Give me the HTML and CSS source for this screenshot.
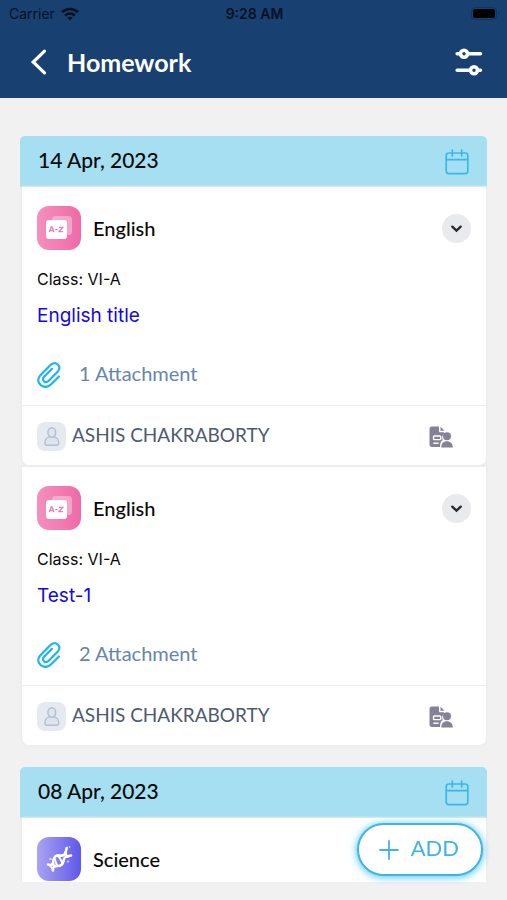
FILE: index.html
```html
<!DOCTYPE html>
<html lang="en">
<head>
<meta charset="utf-8">
<meta name="viewport" content="width=device-width, initial-scale=1">
<title>Homework</title>
<link rel="stylesheet" href="styles.css">
</head>
<body>
<svg class="defs" aria-hidden="true">
  <defs>
    <linearGradient id="pink" x1="0" x2="1"><stop offset="0" stop-color="#f590bd"/><stop offset="1" stop-color="#ee6aa6"/></linearGradient>
    <linearGradient id="violet" x1="0" x2="1"><stop offset="0" stop-color="#a9a4f3"/><stop offset="1" stop-color="#5f57ea"/></linearGradient>
    <symbol id="calendar" viewBox="0 0 24 26">
      <g fill="none" stroke="#3bb8ea" stroke-width="1.7" stroke-linecap="round"><rect x="1.2" y="4" width="21.6" height="20.6" rx="2.6"/><path d="M1.5 10.7h21M7.3 1v6M16.7 1v6"/></g>
    </symbol>
    <symbol id="letters" viewBox="0 0 44 44">
      <rect width="44" height="44" rx="12" fill="url(#pink)"/>
      <rect x="15" y="10" width="20" height="19" rx="3.5" fill="#fff" opacity=".35"/>
      <rect x="9" y="14" width="21" height="19" rx="3" fill="#fff"/>
      <path d="M12.3 26l1.9-5h.8l1.9 5M13.1 24.5h3M18.3 23.6h2.2M22 21.3h3.8L22 25.7h4" fill="none" stroke="#f17db0" stroke-width="1.3"/>
    </symbol>
    <symbol id="dna" viewBox="0 0 44 44">
      <rect width="44" height="44" rx="12" fill="url(#violet)"/>
      <g fill="none" stroke="#fff" stroke-linecap="round" stroke-linejoin="round">
        <path stroke-width="2.6" d="M11 27.5c5 1.500 5-1 5.500-4.500s3-5 6-4.500 5 0 6-2.500l1.200-5M16 33.500c-.5-3.500 1-4.500 4.500-4.500s5.500-2 6-5 1-4 3.500-4.500l4-1"/>
        <path stroke-width="2" d="M12.500 28l3.500 4.500M17.500 21.500l2.500 7M21.500 19l4 7M28 15.500l2.500 4.500M16 25.500l1.500 4"/>
      </g>
      <g fill="#fff" opacity=".6"><circle cx="13.500" cy="22" r="1.300"/><circle cx="31" cy="24.500" r="1.200"/><circle cx="32.500" cy="10" r=".9"/></g>
    </symbol>
    <symbol id="clip" viewBox="0 0 24 26">
      <path d="M22 14.500l-7.300 7.200c-3.400 3.400-7.600 4-10.900 1.500-3.500-2.900-3.400-6.900-.2-10.200L13.200 3.300c2.400-2.400 5.200-2.700 7.500-.9 2.400 2.100 2.200 5-.1 7.400l-8.900 9c-1.600 1.600-3.300 1.700-4.700.5-1.400-1.400-1.200-3.100.3-4.700l7.700-7.800" fill="none" stroke="#1fb4ee" stroke-width="2.200" stroke-linecap="round"/>
    </symbol>
    <symbol id="person" viewBox="0 0 29 29">
      <rect width="29" height="29" rx="8" fill="#e4eaf0"/>
      <g fill="#dde4ee" stroke="#b3bdd3" stroke-width="1.400"><path d="M14.800 14.500c-4.500 0-7 3-7 6.500 0 1.600 1 2.300 2.500 2.300h9c1.500 0 2.500-.7 2.500-2.300 0-3.500-2.500-6.500-7-6.500z"/><ellipse cx="14.800" cy="10.500" rx="3.900" ry="4.700"/></g>
    </symbol>
    <symbol id="report" viewBox="0 0 24 22">
      <path fill="#858295" d="M3 .5h7v4.200c0 1 .6 1.600 1.600 1.600h3.400v2c-2 1.200-2.500 3.400-1.300 5.700-1.700 1.200-2.500 2.800-2.700 7H3c-1.700 0-2.500-.9-2.500-2.500V3C.5 1.300 1.400.5 3 .5zM11.500.7l4 4.100h-4z"/>
      <rect x="4.500" y="10" width="7.200" height="3.600" rx=".8" fill="none" stroke="#fff" stroke-width="1.400"/>
      <path d="M4.200 17.200h5.500" stroke="#fff" stroke-width="1.400"/>
      <circle cx="18" cy="10.300" r="4" fill="#858295"/>
      <path fill="#858295" d="M12.200 21.500c.2-4.100 2.200-6.300 5.700-6.300s5.700 2.200 6 6.300z"/>
    </symbol>
    <symbol id="chevron" viewBox="0 0 29 29"><path d="M10.300 12.700l4.200 4 4.200-4" fill="none" stroke="#292b30" stroke-width="2.400" stroke-linecap="round"/></symbol>
  </defs>
</svg>

<header class="top">
  <div class="status">
    <span class="carrier">Carrier
      <svg width="18" height="14" viewBox="0 0 18 14" aria-hidden="true"><g fill="none" stroke="#06101e" stroke-width="2.600"><path d="M1 5.300c4.600-4.500 11.400-4.500 16 0M4 8.600c3-2.700 7-2.700 10 0"/></g><path d="M9 13.500L6.300 10.800c1.500-1.400 3.900-1.400 5.400 0z" fill="#06101e"/></svg>
    </span>
    <span class="time">9:28 AM</span>
    <span class="power"><svg width="29" height="14" viewBox="0 0 29 14" aria-hidden="true"><rect x=".5" y=".5" width="25" height="12" rx="3.500" fill="none" stroke="#12335b"/><rect x="2" y="2" width="22" height="9" rx="2" fill="#000"/><path d="M27 4.500c1.500.8 1.500 3.200 0 4z" fill="#12335b"/></svg></span>
  </div>
  <nav class="bar">
    <button class="plain" aria-label="Back"><svg width="18" height="28" viewBox="0 0 18 28"><path d="M15.500 3.200L4.200 14l11.300 10.800" fill="none" stroke="#fff" stroke-width="3.200" stroke-linecap="round"/></svg></button>
    <h1>Homework</h1>
    <button class="plain" aria-label="Filter"><svg width="28" height="28" viewBox="0 0 28 28"><g fill="none" stroke="#fff" stroke-linecap="round" stroke-width="3.600"><path d="M2.200 5.800h2M13 5.800h12.500M2.200 22.300h12M23.500 22.300h2"/><circle cx="9" cy="5.800" r="3.500"/><circle cx="19" cy="22.300" r="3.500"/></g></svg></button>
  </nav>
</header>

<main class="list">
  <section class="day">
    <header class="date"><h2>14 Apr, 2023</h2><svg width="24" height="26" aria-hidden="true"><use href="#calendar"/></svg></header>
    <article class="card">
      <div class="body">
        <div class="subject"><svg width="44" height="44" aria-hidden="true"><use href="#letters"/></svg><h3>English</h3><button class="toggle" aria-label="Expand"><svg width="29" height="29"><use href="#chevron"/></svg></button></div>
        <p class="class">Class: VI-A</p>
        <a class="title" href="#">English title</a>
        <a class="files" href="#"><svg width="24" height="26" aria-hidden="true"><use href="#clip"/></svg><span>1 Attachment</span></a>
      </div>
      <footer class="teacher"><svg width="29" height="29" aria-hidden="true"><use href="#person"/></svg><span>ASHIS CHAKRABORTY</span><button class="plain" aria-label="Submissions"><svg width="24" height="22"><use href="#report"/></svg></button></footer>
    </article>
    <article class="card">
      <div class="body">
        <div class="subject"><svg width="44" height="44" aria-hidden="true"><use href="#letters"/></svg><h3>English</h3><button class="toggle" aria-label="Expand"><svg width="29" height="29"><use href="#chevron"/></svg></button></div>
        <p class="class">Class: VI-A</p>
        <a class="title" href="#">Test-1</a>
        <a class="files" href="#"><svg width="24" height="26" aria-hidden="true"><use href="#clip"/></svg><span>2 Attachment</span></a>
      </div>
      <footer class="teacher"><svg width="29" height="29" aria-hidden="true"><use href="#person"/></svg><span>ASHIS CHAKRABORTY</span><button class="plain" aria-label="Submissions"><svg width="24" height="22"><use href="#report"/></svg></button></footer>
    </article>
  </section>
  <section class="day">
    <header class="date"><h2>08 Apr, 2023</h2><svg width="24" height="26" aria-hidden="true"><use href="#calendar"/></svg></header>
    <article class="card">
      <div class="body">
        <div class="subject"><svg width="44" height="44" aria-hidden="true"><use href="#dna"/></svg><h3>Science</h3></div>
      </div>
    </article>
  </section>
</main>
<button class="add"><svg width="20" height="20" viewBox="0 0 20 20" aria-hidden="true"><path d="M10 1v18M1 10h18" stroke="#42b4e4" stroke-width="1.800" stroke-linecap="round"/></svg><span>ADD</span></button>
</body>
</html>
```

FILE: styles.css
```css
* {
  box-sizing: border-box;
}

body {
  margin: 0;
  height: 100vh;
  display: flex;
  flex-direction: column;
  background: #f1f1f1;
  color: #080808;
  font-family: Lato, sans-serif;
}

h1, h2, h3, p {
  margin: 0;
  font-weight: 500;
}

svg {
  display: block;
  flex: none;
}

button {
  font: inherit;
  cursor: pointer;
}

.defs {
  position: absolute;
  width: 0;
  height: 0;
}

.plain {
  padding: 0;
  border: 0;
  background: none;
}

.top {
  flex: none;
  background: #184172;
}

.status {
  display: grid;
  grid-template-columns: 1fr auto 1fr;
  align-items: center;
  height: 28px;
  padding: 0 7px 0 9px;
  color: #06101e;
  font: 14px/20px Inter, sans-serif;
}

.carrier {
  display: flex;
  align-items: center;
  gap: 6px;
}

.time {
  font-weight: 600;
}

.power {
  justify-self: end;
}

.bar {
  display: flex;
  align-items: center;
  height: 70px;
  padding: 0 24px 2px 29px;
}

.bar h1 {
  flex: 1;
  margin-left: 20px;
  color: #fff;
  font-size: 25px;
  line-height: 32px;
  font-weight: 700;
}

.list {
  flex: 1;
  min-height: 0;
  overflow: hidden;
  margin-bottom: 18px;
  padding: 38px 20px 0;
}

.day {
  margin-bottom: 22px;
}

.date {
  display: flex;
  align-items: center;
  justify-content: space-between;
  height: 51px;
  padding: 0 18px;
  border-radius: 5px 5px 0 0;
  background: #a5dff1;
}

.date h2 {
  padding-bottom: 4px;
  font-size: 21px;
  line-height: 26px;
}

.card {
  margin: 0 1px 2px 2px;
  border-radius: 0 0 7px 7px;
  background: #fff;
  box-shadow: 0 0 2px 1px #e9eaeb;
}

.body {
  display: flex;
  flex-direction: column;
  align-items: flex-start;
  padding: 19px 15px 16px;
}

.subject {
  display: flex;
  align-items: center;
  gap: 12px;
  width: 100%;
}

.subject h3 {
  flex: 1;
  font-size: 20px;
  line-height: 26px;
}

.toggle {
  padding: 0;
  border: 0;
  border-radius: 50%;
  background: #e8eaec;
}

.class {
  margin-top: 17px;
  font: 16px/24px Inter, sans-serif;
}

.title {
  margin-top: 13px;
  color: #1408e0;
  font: 19px/24px Inter, sans-serif;
  text-decoration: none;
}

.files {
  display: flex;
  align-items: center;
  gap: 18px;
  height: 28px;
  margin-top: 33px;
  color: #6685ad;
  font-size: 20px;
  line-height: 28px;
  text-decoration: none;
}

.files span,
.teacher span,
.add span {
  padding-bottom: 4px;
}

.teacher {
  display: flex;
  align-items: center;
  gap: 6px;
  height: 60px;
  padding: 2px 33px 0 15px;
  border-top: 1px solid #ebedee;
  color: #4d5a70;
  font-size: 19px;
  line-height: 28px;
}

.teacher span {
  flex: 1;
}

.add {
  position: fixed;
  right: 24px;
  bottom: 24px;
  display: flex;
  align-items: center;
  gap: 12px;
  height: 53px;
  padding: 0 22px 0 20px;
  border: 2px solid #42b4e4;
  border-radius: 27px;
  background: #fff;
  box-shadow: 0 1px 7px 1px #5fcff9;
  color: #42b4e4;
  font-size: 22px;
  line-height: 28px;
}
```
